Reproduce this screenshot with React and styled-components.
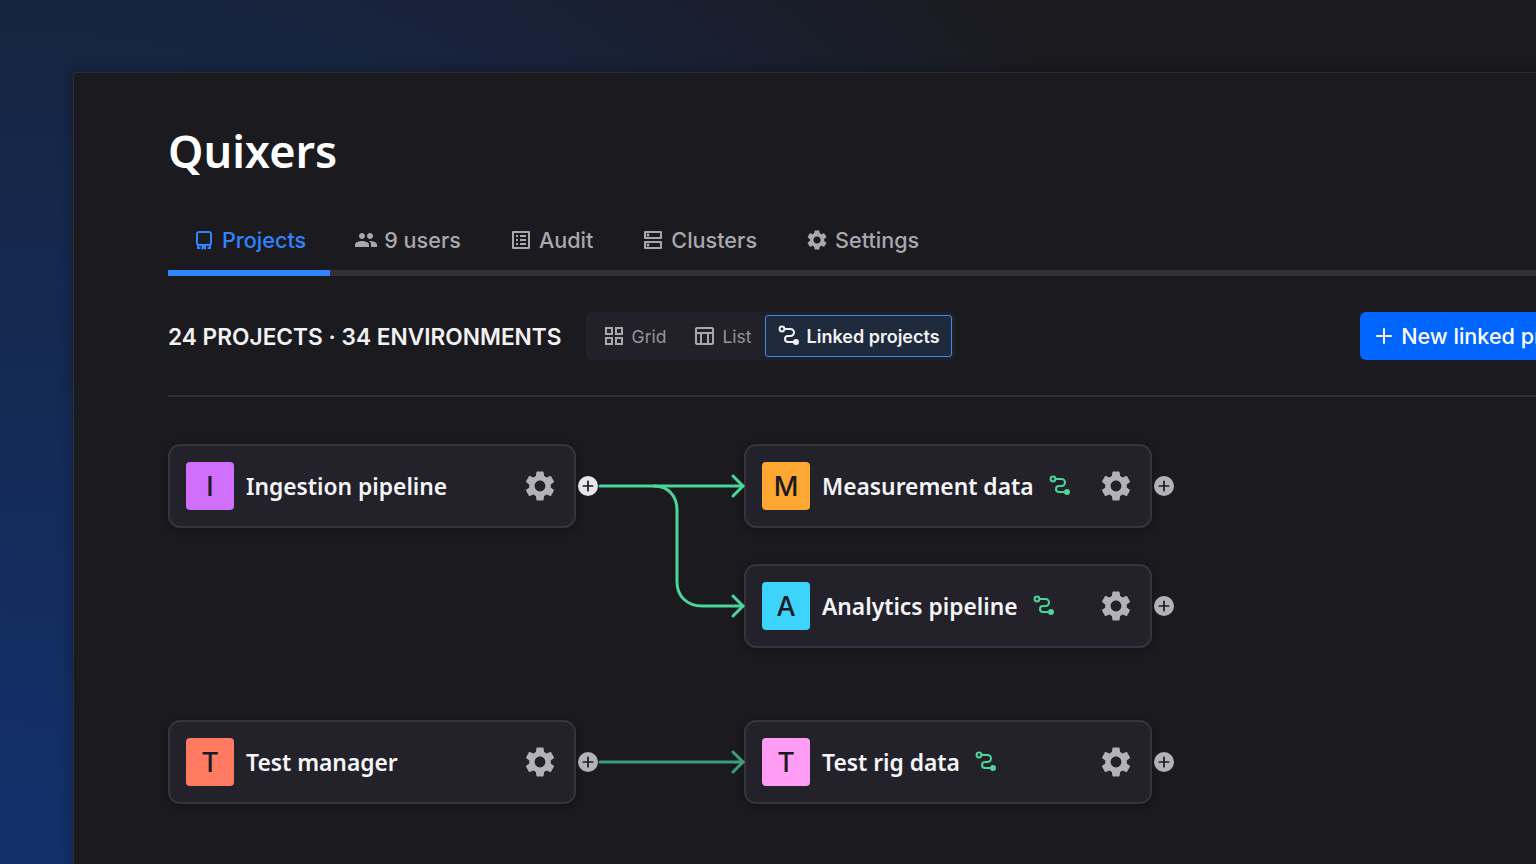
import styled, { createGlobalStyle } from 'styled-components'
import { Plus } from 'lucide-react'
import {
  MdPeople,
  MdOutlineListAlt,
  MdOutlineDns,
  MdSettings,
  MdOutlineGridView,
  MdOutlineTableChart,
} from 'react-icons/md'

const GlobalStyle = createGlobalStyle`
  html, body {
    margin: 0;
    height: 100%;
    overflow: hidden;
    background: #1b1a1f;
  }
  * { box-sizing: border-box; }
`

function BookIcon() {
  return (
    <svg width="24" height="24" viewBox="0 0 24 24" fill="none" stroke="currentColor" strokeWidth="2">
      <rect x="5" y="4" width="14" height="13" rx="2" />
      <path d="M6 17v3h2.5M18 17v3h-2.5" />
      <path d="M9.5 18h4.5v4l-2.2-1.2L9.5 22z" fill="currentColor" stroke="none" />
    </svg>
  )
}

function RouteIcon({ size = 24 }) {
  return (
    <svg width={size} height={size} viewBox="0 0 24 24" fill="none" stroke="currentColor" strokeWidth="2" strokeLinecap="round">
      <circle cx="5" cy="5" r="2.4" />
      <path d="M8 5h5.5a3.5 3.5 0 0 1 0 7H11a3 3 0 0 0 0 6h6" />
      <circle cx="19" cy="18" r="3" fill="currentColor" stroke="none" />
    </svg>
  )
}

const tabs = [
  { label: 'Projects', icon: <BookIcon />, active: true },
  { label: '9 users', icon: <MdPeople size={26} /> },
  { label: 'Audit', icon: <MdOutlineListAlt size={24} /> },
  { label: 'Clusters', icon: <MdOutlineDns size={24} /> },
  { label: 'Settings', icon: <MdSettings size={24} /> },
]

const rows = [
  [
    { name: 'Ingestion pipeline', letter: 'I', color: '#cf6ffb', active: true },
    { name: 'Measurement data', letter: 'M', color: '#ffa733', linked: true },
  ],
  [
    null,
    { name: 'Analytics pipeline', letter: 'A', color: '#3dd4fb', linked: true },
  ],
  [
    { name: 'Test manager', letter: 'T', color: '#ff7a60', gapTop: true },
    { name: 'Test rig data', letter: 'T', color: '#ff9cf3', linked: true, gapTop: true },
  ],
]

function ProjectCard({ name, letter, color, linked, active, gapTop }) {
  return (
    <Card $gapTop={gapTop}>
      <Tile $color={color}>{letter}</Tile>
      <Name>{name}</Name>
      {linked && <LinkedMark><RouteIcon /></LinkedMark>}
      <Gear><MdSettings size={36} /></Gear>
      <AddNode $active={active}><Plus size={16} strokeWidth={2.6} /></AddNode>
    </Card>
  )
}

export default function App() {
  return (
    <Page>
      <GlobalStyle />
      <Panel>
        <Title>Quixers</Title>
        <Tabs>
          {tabs.map((tab) => (
            <Tab key={tab.label} $active={tab.active}>
              <TabIcon>{tab.icon}</TabIcon>
              {tab.label}
            </Tab>
          ))}
        </Tabs>
        <Toolbar>
          <Count>24 PROJECTS · 34 ENVIRONMENTS</Count>
          <Segments>
            <Segment><MdOutlineGridView size={24} />Grid</Segment>
            <Segment><MdOutlineTableChart size={24} />List</Segment>
            <Segment $active><RouteIcon />Linked projects</Segment>
          </Segments>
          <NewButton><Plus size={24} strokeWidth={2} />New linked project</NewButton>
        </Toolbar>
        <Diagram>
          <Links width="600" height="360" viewBox="0 0 600 360" fill="none" strokeLinecap="round" strokeLinejoin="round">
            <g stroke="#4bd69a" strokeWidth="3">
              <path d="M24 42H167" />
              <path d="M78 42C92 42 101 52 101 66V138C101 152 111 162 126 162H167" />
              <path d="M157 32L167 42L157 52" />
              <path d="M157 152L167 162L157 172" />
            </g>
            <g stroke="#3a9e78" strokeWidth="3">
              <path d="M24 318H167" />
              <path d="M157 308L167 318L157 328" />
            </g>
          </Links>
          {rows.map((row) => row.map((card, i) => (
            card ? <ProjectCard key={card.name} {...card} /> : <span key={i} />
          )))}
        </Diagram>
      </Panel>
    </Page>
  )
}

const Page = styled.div`
  width: 1536px;
  height: 864px;
  overflow: hidden;
  padding: 72px 0 0 73px;
  background: radial-gradient(circle at 0 100%, #12306a 0, #12306a 60px, #17243f 880px, #1b1a1f 1320px);
  font-family: Inter, "Liberation Sans", sans-serif;
`

const Panel = styled.main`
  width: 1600px;
  height: 900px;
  padding: 1px 0 0 94px;
  background: #1b1a1f;
  border: 1px solid #2e2d32;
  border-right: 0;
  border-radius: 4px 0 0 0;
  box-shadow: 0 0 12px rgba(10, 12, 20, 0.4);
`

const Title = styled.h1`
  margin: 0;
  padding-top: 47px;
  height: 126px;
  font-family: "Noto Sans", sans-serif;
  font-size: 45px;
  font-weight: 600;
  line-height: 60px;
  color: #ffffff;
`

const Tabs = styled.nav`
  display: flex;
  height: 76px;
  border-bottom: 6px solid #323137;
`

const Tab = styled.div`
  display: flex;
  align-items: center;
  gap: 6px;
  height: 76px;
  padding: 10px 24px 0;
  font-size: 21.6px;
  font-weight: 500;
  color: ${(p) => (p.$active ? '#2f84ff' : '#a9a8ae')};
  border-bottom: 6px solid ${(p) => (p.$active ? '#2f84ff' : 'transparent')};
`

const TabIcon = styled.span`
  display: flex;
  align-items: center;
  justify-content: center;
  width: 24px;
  height: 24px;
`

const Toolbar = styled.div`
  display: flex;
  align-items: center;
  height: 121px;
  padding: 1px 64px 0 0;
  border-bottom: 2px solid #2f2e33;
`

const Count = styled.div`
  font-size: 22.7px;
  font-weight: 600;
  color: #f2f2f4;
  margin-right: 24px;
  white-space: nowrap;
`

const Segments = styled.div`
  display: flex;
  align-items: center;
  height: 48px;
  padding: 3px;
  background: #222129;
  border-radius: 6px;
`

const Segment = styled.div`
  display: flex;
  align-items: center;
  gap: 6px;
  height: 42px;
  padding: 0 ${(p) => (p.$active ? '11px' : '13px')};
  font-size: ${(p) => (p.$active ? '18px' : '17.5px')};
  font-weight: ${(p) => (p.$active ? 600 : 400)};
  color: ${(p) => (p.$active ? '#f2f2f4' : '#96959c')};
  background: ${(p) => (p.$active ? '#1f2a3d' : 'transparent')};
  border: ${(p) => (p.$active ? '1.5px solid #3f87f0' : '0')};
  border-radius: 3px;
  svg { color: ${(p) => (p.$active ? '#f2f2f4' : '#a9a8ae')}; }
`

const NewButton = styled.button`
  display: flex;
  align-items: center;
  gap: 5px;
  height: 48px;
  margin-left: auto;
  padding: 0 16px 0 12px;
  border: 0;
  border-radius: 6px;
  background: #0066ff;
  color: #ffffff;
  font-family: Inter, sans-serif;
  font-size: 21.6px;
  font-weight: 500;
  white-space: nowrap;
`

const Diagram = styled.section`
  position: relative;
  display: grid;
  grid-template-columns: 408px 408px;
  grid-auto-rows: 84px;
  column-gap: 168px;
  row-gap: 36px;
  padding-top: 47px;
`

const Links = styled.svg`
  position: absolute;
  left: 408px;
  top: 47px;
  z-index: 1;
`

const Card = styled.article`
  position: relative;
  display: flex;
  align-items: center;
  height: 84px;
  padding: 0 16px;
  margin-top: ${(p) => (p.$gapTop ? '36px' : '0')};
  background: #23222b;
  border: 2px solid #35343b;
  border-radius: 12px;
  box-shadow: 0 2px 8px rgba(0, 0, 0, 0.3);
`

const Tile = styled.div`
  display: flex;
  align-items: center;
  justify-content: center;
  flex: none;
  width: 48px;
  height: 48px;
  margin-right: 12px;
  border-radius: 4px;
  background: ${(p) => p.$color};
  color: #1b1a24;
  font-size: 27px;
  font-weight: 500;
`

const Name = styled.div`
  font-family: "Noto Sans", sans-serif;
  font-size: 22.8px;
  font-weight: 600;
  color: #f6f6f8;
  white-space: nowrap;
`

const LinkedMark = styled.span`
  display: flex;
  margin-left: 14px;
  color: #4bd69a;
`

const Gear = styled.span`
  display: flex;
  margin-left: auto;
  color: #b3b2b9;
`

const AddNode = styled.span`
  position: absolute;
  right: -24px;
  top: 30px;
  width: 20px;
  height: 20px;
  border-radius: 50%;
  display: flex;
  align-items: center;
  justify-content: center;
  background: ${(p) => (p.$active ? '#e8e8ec' : '#b3b2b9')};
  color: #1b1a24;
  z-index: 2;
`
